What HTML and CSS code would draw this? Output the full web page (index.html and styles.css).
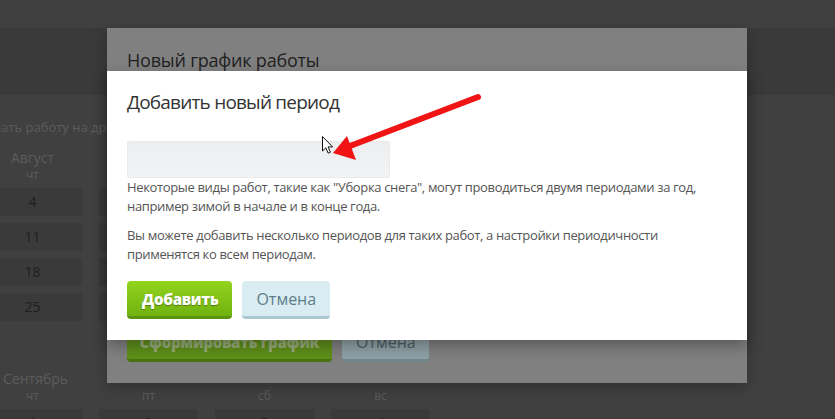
FILE: index.html
```html
<!DOCTYPE html>
<html lang="ru">
<head>
<meta charset="UTF-8">
<meta name="viewport" content="width=device-width, initial-scale=1.0">
<title>Новый график работы</title>
<link rel="stylesheet" href="styles.css">
</head>
<body>
    <!-- страница под затемнением -->
    <div class="page">
        <div class="topbar"></div>
        <div class="content">
            <p class="hint"><span class="hint-cut">Переназначать работу на другой день</span></p>

            <section class="month">
                <div class="month-grid">
                    <div class="month-label">Август</div>
                    <div class="wd">чт</div><div></div><div></div><div></div>
                    <div class="day">4</div><div class="day"></div><div class="day"></div><div class="day"></div>
                    <div class="day">11</div><div class="day"></div><div class="day"></div><div class="day"></div>
                    <div class="day">18</div><div class="day"></div><div class="day"></div><div class="day"></div>
                    <div class="day">25</div><div class="day"></div><div class="day"></div><div class="day"></div>
                </div>
            </section>

            <section class="month month-sep">
                <div class="month-title">Сентябрь</div>
                <div class="month-grid">
                    <div class="wd">чт</div><div class="wd">пт</div><div class="wd">сб</div><div class="wd">вс</div>
                    <div class="day">1</div><div class="day">2</div><div class="day">3</div><div class="day">4</div>
                </div>
            </section>
        </div>
    </div>

    <!-- первое окно (затемнено) -->
    <div class="dialog dialog-back">
        <h2 class="dialog-title">Новый график работы</h2>
        <div class="dialog-actions">
            <button class="btn btn-green">Сформировать график</button>
            <button class="btn btn-light">Отмена</button>
        </div>
    </div>

    <!-- второе окно -->
    <div class="dialog dialog-front">
        <h2 class="dialog-title">Добавить новый период</h2>
        <input class="field" type="text">
        <p class="note">Некоторые виды работ, такие как "Уборка снега", могут проводиться двумя периодами за год, например зимой в начале и в конце года.</p>
        <p class="note">Вы можете добавить несколько периодов для таких работ, а настройки периодичности применятся ко всем периодам.</p>
        <div class="dialog-actions">
            <button class="btn btn-green">Добавить</button>
            <button class="btn btn-light">Отмена</button>
        </div>
    </div>

    <!-- стрелка и курсор -->
    <svg class="pointer-arrow" width="835" height="419" viewBox="0 0 835 419">
        <line x1="478" y1="97" x2="350" y2="146" stroke="#f01414" stroke-width="6" stroke-linecap="round"/>
        <polygon points="333,153 347,136 356,160" fill="#f01414"/>
        <path d="M322.5 136.5 L322.5 151 L325.8 147.8 L328.2 153.2 L330.4 152.2 L328.1 146.9 L332.6 146.9 Z" fill="#fff" stroke="#111" stroke-width="1" stroke-linejoin="round"/>
    </svg>
</body>
</html>
```

FILE: styles.css
```css
body {
    margin: 0;
    width: 835px;
    height: 419px;
    overflow: hidden;
    background: #404040;
    font-family: "Open Sans", "Noto Sans", sans-serif;
    position: relative;
}
.page {
    padding-top: 28px;
}
.topbar {
    height: 67px;
    background: #3a3a3a;
}
.content {
    overflow: hidden;
}
.hint {
    margin: 23px 0 0;
    height: 18px;
    font-size: 13px;
    line-height: 18px;
    color: #5c5c5c;
    white-space: nowrap;
}
.hint-cut {
    margin-left: -76px;
}
.month-grid {
    display: grid;
    grid-template-columns: repeat(4, 99px);
    column-gap: 17px;
    margin-left: -17px;
}
.month-label {
    grid-column: 1 / 5;
    width: 99px;
    text-align: center;
    font-size: 14px;
    line-height: 18px;
    margin-top: 13px;
    color: #5c5c5c;
}
.wd {
    text-align: center;
    font-size: 12px;
    line-height: 16px;
    color: #5c5c5c;
}
.day {
    height: 28px;
    line-height: 28px;
    margin-top: 7px;
    background: #3a3a3a;
    text-align: center;
    font-size: 14px;
    color: #1e1e1e;
}
.month-grid > :nth-child(-n+9).day {
    margin-top: 5px;
}
.month-sep {
    margin-top: 49px;
}
.month-sep .day {
    margin-top: 5px;
}
.month-title {
    margin-left: 3px;
    font-size: 14px;
    line-height: 18px;
    color: #5c5c5c;
}

.dialog {
    position: absolute;
    left: 107px;
    width: 600px;
    padding: 0 20px;
    box-sizing: content-box;
    display: flex;
    flex-direction: column;
    align-items: flex-start;
}
.dialog-back {
    top: 28px;
    height: 355px;
    background: #808080;
    box-shadow: 0 4px 14px rgba(0,0,0,0.25);
    justify-content: space-between;
}
.dialog-back .dialog-title {
    margin: 20px 0 0;
    font-size: 18px;
    font-weight: 400;
    line-height: 24px;
    letter-spacing: -0.2px;
    color: #202020;
}
.dialog-back .dialog-actions {
    margin-bottom: 21px;
}
.dialog-front {
    top: 71px;
    height: 269px;
    background: #fff;
    box-shadow: 0 6px 14px rgba(0,0,0,0.3);
}
.dialog-front .dialog-title {
    margin: 17px 0 0;
    font-size: 19px;
    font-weight: 400;
    line-height: 28px;
    letter-spacing: -0.8px;
    color: #333;
}
.field {
    margin: 25px 0 0;
    width: 263px;
    height: 37px;
    box-sizing: border-box;
    border: 1px solid #e8eaec;
    border-radius: 2px;
    background: linear-gradient(#eceef0, #f2f3f5);
}
.note {
    margin: 0;
    font-size: 13px;
    line-height: 19px;
    letter-spacing: -0.35px;
    color: #555;
}
.note + .note {
    margin-top: 10px;
}
.dialog-front .dialog-actions {
    margin-top: 17px;
}
.dialog-actions {
    display: flex;
    gap: 10px;
}
.btn {
    height: 38px;
    padding: 0 14px;
    border: 0;
    border-radius: 4px;
    font-family: "Open Sans", "Noto Sans", sans-serif;
    white-space: nowrap;
    cursor: pointer;
}
.btn-green {
    padding: 0 14px 0 15px;
    background: linear-gradient(#93d41e, #70b20f);
    border-bottom: 3px solid #5b9410;
    color: #fff;
    font-size: 15px;
    font-weight: 800;
    letter-spacing: -0.3px;
    text-shadow: 0 1px 1px rgba(0,0,0,0.35);
}
.btn-light {
    background: #d9ecf2;
    border-bottom: 3px solid #aac6ce;
    color: #5d7f89;
    font-size: 16px;
    font-weight: 400;
}
.dialog-back .btn-green {
    background: #5f8f1a;
    border-bottom-color: #4a7212;
    color: #98ad7a;
    font-size: 15px;
    padding: 0;
    width: 205px;
    text-shadow: none;
}
.dialog-back .btn-light {
    background: #8ea1a6;
    border-bottom-color: #72878c;
    color: #4c5d62;
    width: 87px;
}
.pointer-arrow {
    position: absolute;
    left: 0;
    top: 0;
    pointer-events: none;
}
```
